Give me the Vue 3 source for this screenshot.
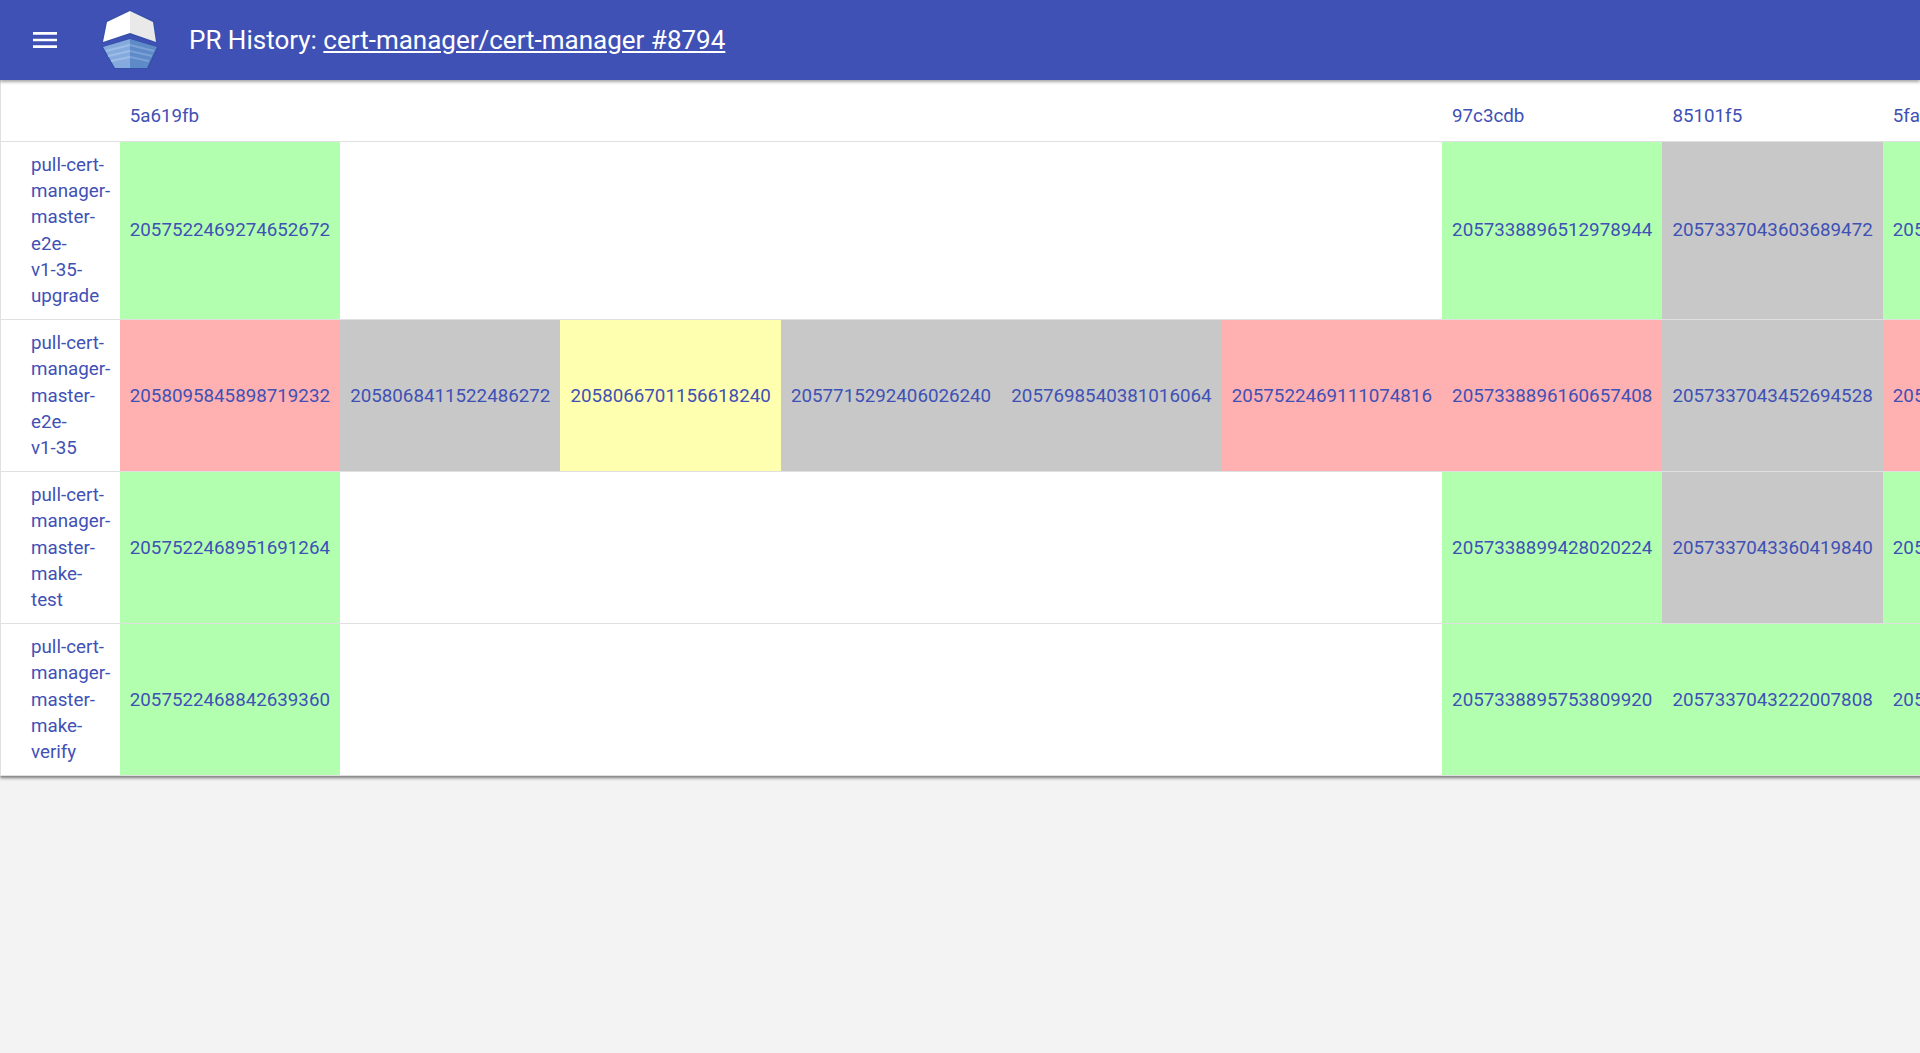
<script setup>
const g = 'g', r = 'r', y = 'y', s = 's'
const commits = ['5a619fb', '', '', '', '', '', '97c3cdb', '85101f5', '5fa']
const rows = [
  { lines: ['pull-cert-', 'manager-', 'master-', 'e2e-', 'v1-35-', 'upgrade'], cells: [[g, '2057522469274652672'], 0, 0, 0, 0, 0, [g, '2057338896512978944'], [s, '2057337043603689472'], [g, '205']] },
  { lines: ['pull-cert-', 'manager-', 'master-', 'e2e-', 'v1-35'], cells: [[r, '2058095845898719232'], [s, '2058068411522486272'], [y, '2058066701156618240'], [s, '2057715292406026240'], [s, '2057698540381016064'], [r, '2057522469111074816'], [r, '2057338896160657408'], [s, '2057337043452694528'], [r, '205']] },
  { lines: ['pull-cert-', 'manager-', 'master-', 'make-', 'test'], cells: [[g, '2057522468951691264'], 0, 0, 0, 0, 0, [g, '2057338899428020224'], [s, '2057337043360419840'], [g, '205']] },
  { lines: ['pull-cert-', 'manager-', 'master-', 'make-', 'verify'], cells: [[g, '2057522468842639360'], 0, 0, 0, 0, 0, [g, '2057338895753809920'], [g, '2057337043222007808'], [g, '205']] },
]
</script>

<template>
  <div class="page">
    <header class="bar">
      <svg class="menu" viewBox="0 0 24 24"><path fill="#fff" d="M3 18h18v-2H3v2zm0-5h18v-2H3v2zm0-7v2h18V6H3z" /></svg>
      <svg class="logo" viewBox="0 0 58 60">
        <polygon points="29,0 5,11 1,33 28,25 56,33 53,11" fill="#3550a8" />
        <polygon points="29,1 6,12 2,32 29,23" fill="#fff" />
        <polygon points="29,1 52,12 55,32 29,23" fill="#e9e9e9" />
        <polygon points="29,28 0,37 13,59 47,59 58,37" fill="#3550a8" />
        <polygon points="29,29 2,37 14,58 29,58" fill="#85abde" />
        <polygon points="29,29 56,37 46,58 29,58" fill="#5f8ac8" />
        <path d="M5 41 29 35M7 46 29 41M10 51 29 47" stroke="#9dbde6" stroke-width="2" fill="none" />
        <path d="M29 35 53 41M29 41 51 46M29 47 48 51" stroke="#7ba1d6" stroke-width="2" fill="none" />
      </svg>
      <h1 class="title">PR History: <a class="title-link" href="#">cert-manager/cert-manager #8794</a></h1>
    </header>
    <main class="main">
      <table class="grid">
        <thead>
          <tr>
            <th class="corner"></th>
            <th v-for="(c, i) in commits" :key="i" class="commit">{{ c }}</th>
          </tr>
        </thead>
        <tbody>
          <tr v-for="(row, ri) in rows" :key="ri">
            <td class="name"><span v-for="l in row.lines" :key="l" class="name-line">{{ l }}</span></td>
            <td v-for="(c, i) in row.cells" :key="i" :class="['cell', c ? 'st-' + c[0] : '']">{{ c ? c[1] : '' }}</td>
          </tr>
        </tbody>
      </table>
    </main>
  </div>
</template>

<style>
html, body { margin: 0; background: #f3f3f3; overflow: hidden; }
</style>

<style scoped>
.page {
  height: 1053px;
  overflow: hidden;
  font-family: Roboto, sans-serif;
  background: #f3f3f3;
  color: #3f51b5;
}
.bar {
  position: relative;
  z-index: 2;
  height: 80px;
  background: #3f51b5;
  color: #fff;
  display: flex;
  align-items: center;
  box-shadow: 0 2px 3px rgba(0, 0, 0, .35);
}
.menu { width: 32px; height: 32px; margin-left: 29px; }
.logo { width: 58px; height: 60px; margin-left: 40px; }
.title {
  margin: 0 0 0 30px;
  font-size: 26px;
  font-weight: 400;
  line-height: 32px;
  white-space: nowrap;
  position: relative;
  top: -0.5px;
}
.title-link { color: #fff; text-decoration: underline; }
.main {
  width: 1920px;
  overflow: hidden;
  padding-bottom: 10px;
}
.grid {
  border-collapse: collapse;
  table-layout: fixed;
  width: 2103.3px;
  background: #fff;
  font-size: 18.75px;
  line-height: 26.2px;
  box-shadow: 0 2px 3px rgba(0, 0, 0, .5);
  border-left: 1px solid #e0e0e0;
}
th, td {
  padding: 0 10px;
  font-weight: 400;
  text-align: left;
  border-bottom: 1px solid #e0e0e0;
  white-space: nowrap;
}
.corner { width: 78.7px; padding: 12px 10px 0 30px; height: 48.9px; }
.commit { width: 200.4px; padding-top: 12px; height: 48.9px; }
td { text-align: center; }
.name {
  padding: 10px 10px 10px 30px;
  text-align: left;
}
.name-line { display: block; }
.cell:last-child, .commit:last-child { text-align: left; }
.st-g { background: #b3ffb0; }
.st-r { background: #ffb0b0; }
.st-y { background: #ffffb0; }
.st-s { background: #c8c8c8; }
</style>
